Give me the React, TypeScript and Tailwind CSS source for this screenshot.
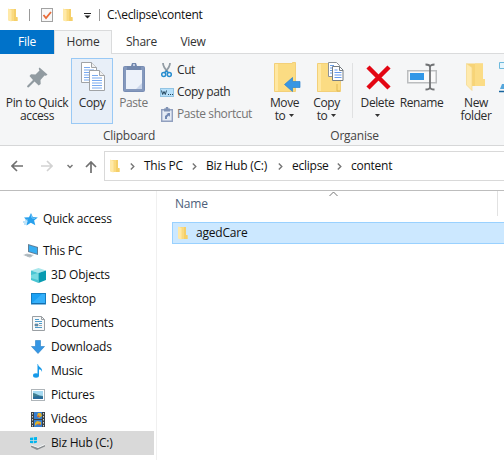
import type { ReactNode } from "react";

type IconProps = { w: number; h: number; children: ReactNode; className?: string };

function Icon({ w, h, children, className = "" }: IconProps) {
  return (
    <svg width={w} height={h} viewBox={`0 0 ${w} ${h}`} className={`block shrink-0 ${className}`}>
      {children}
    </svg>
  );
}

function FolderIcon({ className = "" }: { className?: string }) {
  return (
    <Icon w={10} h={14} className={className}>
      <path d="M1 1h7v8.500h1.500v3.500H1z" fill="#fada80" />
      <path d="M6 1h2v8h1.500v4H6z" fill="#f5cf69" />
      <path d="M0 .500l3.500 1.500v11.500L0 12.500z" fill="#ffe9a8" />
    </Icon>
  );
}

function PinIcon() {
  return (
    <Icon w={21} h={21}>
      <path d="M12.500.500l8 7-1.500 1.200-1.500-.2-4 4.500.2 4-2 1.500-4.200-4L1.500 20.500 0 20l.5-1.500L6 13 2.500 9 4 7.300l4.500.2 4-4-.8-1.800z" fill="#919ba1" />
    </Icon>
  );
}

function Sheet({ x, y }: { x: number; y: number }) {
  return (
    <g transform={`translate(${x} ${y})`}>
      <path d="M.500.500h10l5 5v15H.500z" fill="#fff" stroke="#a0a3a6" />
      <path d="M10.500.500v5h5" fill="#f0f0f0" stroke="#a0a3a6" />
      <path d="M3 5.500h6M3 8h10M3 10.500h10M3 13h10M3 15.500h10M3 18h10" stroke="#79aaf0" strokeWidth="1.100" />
    </g>
  );
}

function CopyIcon() {
  return (
    <Icon w={25} h={30}>
      <Sheet x={0} y={0} />
      <Sheet x={8} y={8} />
    </Icon>
  );
}

function PasteIcon() {
  return (
    <Icon w={22} h={30}>
      <rect x=".500" y="4.500" width="21" height="25" rx="1" fill="#8599bd" stroke="#788db4" />
      <path d="M3 8h16v19H3z" fill="#edf2fa" />
      <path d="M13 27l6-6v6z" fill="#ccd7eb" />
      <path d="M4 4h4l1-3h4l1 3h4v4H4z" fill="#7388ad" />
      <circle cx="11" cy="3" r="1" fill="#dce5f5" />
    </Icon>
  );
}

function CutIcon() {
  return (
    <Icon w={12} h={15}>
      <path d="M2 0c0 4 2 6 5 9M9 0C9 4 7 6 4 9" fill="none" stroke="#929ca4" strokeWidth="1.800" />
      <circle cx="2.700" cy="11.500" r="2" fill="none" stroke="#288ed0" strokeWidth="1.500" />
      <circle cx="8.300" cy="11.500" r="2" fill="none" stroke="#288ed0" strokeWidth="1.500" />
      <path d="M4 9.500l1.500-1.500L7 9.500" fill="none" stroke="#288ed0" strokeWidth="1.500" />
    </Icon>
  );
}

function PathIcon() {
  return (
    <Icon w={14} h={9}>
      <rect x=".500" y=".500" width="13" height="8" fill="#b7e0fa" stroke="#92c4e3" />
      <path d="M1.500 2.500l1.200 4 1.300-3 1.300 3 1.200-4M8 6.500h1M10 6.500h1M12 6.500h1" fill="none" stroke="#24475f" />
    </Icon>
  );
}

function ShortcutIcon() {
  return (
    <Icon w={12} h={15}>
      <path d="M.700 2.700h10.600v11.600H.700z" fill="#e5ebf5" stroke="#91a0bf" strokeWidth="1.400" />
      <path d="M3 1.500h1.500L5 0h2l.5 1.500H9v3H3z" fill="#8193b5" />
      <path d="M4 12V9l3-2.500L5 6h4v4L8 8.500 6 10v2z" fill="#7288b2" />
    </Icon>
  );
}

function MoveIcon() {
  return (
    <Icon w={27} h={31}>
      <path d="M.500 1.500h18V.500h3v29H.500z" fill="#fbdc83" stroke="#f3d079" />
      <path d="M1 2h3v27H1z" fill="#ffe8a2" />
      <path d="M10.500 22.500l8-7v4h7.500v6h-7.500v4z" fill="#3896e3" stroke="#2b83cf" strokeWidth=".7" />
    </Icon>
  );
}

function CopyToIcon() {
  return (
    <Icon w={27} h={31}>
      <path d="M.500 1.500h20v16h3v12H.500z" fill="#fbdc83" stroke="#f3d079" />
      <path d="M1 2h3v27H1z" fill="#ffe8a2" />
      <path d="M20 22v7h3" stroke="#dfb955" fill="none" />
      <path d="M11.500.500h8l3 3v11h-11z" fill="#fff" stroke="#8d9296" />
      <path d="M13 3.500h4M13 6h3M13 8.500h3M13 11h3" stroke="#6a9fe7" />
      <path d="M15.500 4.500h7l3.500 3.500v10.500H15.500z" fill="#fff" stroke="#777e84" />
      <path d="M22.500 4.500v4H26" fill="none" stroke="#777e84" />
      <path d="M17.500 8h3M17.500 10.500h7M17.500 13h7M17.500 15.500h7" stroke="#6499ee" />
    </Icon>
  );
}

function DeleteIcon() {
  return (
    <Icon w={25} h={25}>
      <path d="M2 2l21 21M23 2L2 23" stroke="#e30613" strokeWidth="4.500" />
    </Icon>
  );
}

function RenameIcon() {
  return (
    <Icon w={30} h={28}>
      <rect x=".750" y="7.750" width="28.500" height="12" fill="#fafafa" stroke="#bbbdbf" strokeWidth="1.500" />
      <rect x="3" y="10" width="14" height="7" fill="#3197e7" />
      <path d="M18.500 1.500c2.500 0 4.500 .500 4.500 2.500 0-2 2-2.500 4.500-2.500M23 3v22M18.500 26.500c2.500 0 4.500-.500 4.500-2.500 0 2 2 2.500 4.500 2.500" fill="none" stroke="#707274" strokeWidth="1.800" />
    </Icon>
  );
}

function NewFolderIcon() {
  return (
    <Icon w={20} h={28}>
      <path d="M1 .500h16v15.500h2v7H5z" fill="#f7d477" />
      <path d="M9 .500h8v15.500h2v7H9z" fill="#fbdc86" />
      <path d="M.500.500L6 4.500v23L.500 22z" fill="#ffeaad" stroke="#f4d78a" strokeWidth=".7" />
    </Icon>
  );
}

function Caret() {
  return (
    <Icon w={5} h={3}>
      <path d="M0 0h5L2.500 3z" fill="#333" />
    </Icon>
  );
}

function Crumb() {
  return (
    <Icon w={5} h={7}>
      <path d="M.800.500l3 3-3 3" fill="none" stroke="#767676" strokeWidth="1.400" />
    </Icon>
  );
}

type BigProps = { width: string; icon: ReactNode; lines: ReactNode[]; pad?: string; tone?: string };

function BigButton({ width, icon, lines, pad = "", tone = "text-[#2b2b2b]" }: BigProps) {
  return (
    <div className={`flex h-[66px] shrink-0 flex-col items-center ${width} ${tone}`}>
      <div className={`flex h-[38px] items-center ${pad}`}>{icon}</div>
      {lines.map((line, i) => (
        <div key={i} className="flex h-[13px] items-center gap-1 leading-[13px] whitespace-nowrap">
          {line}
        </div>
      ))}
    </div>
  );
}

function SmallButton({ icon, label, tone = "" }: { icon: ReactNode; label: string; tone?: string }) {
  return (
    <div className={`flex h-[22px] items-center ${tone}`}>
      <span className="flex w-[18px] shrink-0 justify-center">{icon}</span>
      <span className="pl-px whitespace-nowrap">{label}</span>
    </div>
  );
}

function StarIcon() {
  return (
    <Icon w={15} h={13}>
      <path d="M8 0l1.800 4 5 .5-3.700 3 1.200 4.800-4.500-2.500-4.300 2.700L4.500 8 1 4.500l5-.3z" fill="#28a0ec" />
      <path d="M2 7h3M0 9h4M1 11h3" stroke="#7cc7f5" />
      <path d="M8 2l1 3 3 .500" fill="none" stroke="#70c5fa" />
    </Icon>
  );
}

function ComputerIcon() {
  return (
    <Icon w={16} h={14}>
      <path d="M5 0l10 3v8L5 8z" fill="#607e96" />
      <path d="M6 1.200l8 2.500v6L6 7.300z" fill="#37aef1" />
      <path d="M0 11l4-1.500 7 1.500-4 2.700z" fill="#c5ccd1" />
      <path d="M2 11h6M4 12h5" stroke="#929ea6" strokeWidth=".6" />
    </Icon>
  );
}

function CubeIcon() {
  return (
    <Icon w={15} h={15}>
      <path d="M7.500 0L15 2.500 7.500 5 0 2.500z" fill="#a8e7ec" />
      <path d="M0 2.500L7.500 5v10L0 12z" fill="#49c5d3" />
      <path d="M15 2.500L7.500 5v10l7.500-3z" fill="#079bb1" />
      <path d="M0 7l7-2v7l-7-2z" fill="#77dbe1" />
    </Icon>
  );
}

function DesktopIcon() {
  return (
    <Icon w={15} h={12}>
      <rect x=".500" y=".500" width="14" height="10.500" fill="#1ba1f4" stroke="#157dc0" />
      <path d="M1 10L11 1h3v9z" fill="#35b0fa" />
      <path d="M1 10.500h13" stroke="#176eac" />
    </Icon>
  );
}

function DocumentIcon() {
  return (
    <Icon w={13} h={15}>
      <path d="M.500.500h9l3 3v11H.500z" fill="#f7f9fa" stroke="#9a9fa3" />
      <path d="M9.500.500v3h3" fill="none" stroke="#9a9fa3" />
      <path d="M3 3.500h4M3 5.500h7M7 7.500h3M3 11.500h7" stroke="#4e9bca" />
      <path d="M3 8h3v2H3zM7 9.500h3" fill="#4e9bca" stroke="#68747c" strokeWidth=".6" />
    </Icon>
  );
}

function DownloadIcon() {
  return (
    <Icon w={14} h={14}>
      <path d="M4.500.500h5v6h4L7 13.500.500 6.500h4z" fill="#3596e4" stroke="#287fc6" strokeWidth=".6" />
    </Icon>
  );
}

function MusicIcon() {
  return (
    <Icon w={10} h={14}>
      <ellipse cx="3" cy="11.500" rx="3" ry="2.200" fill="#179ae9" />
      <path d="M5 0c0 3 5 3.500 4 8C8.500 6 7.500 5.500 6 5.500v6H4.500V0z" fill="#179ae9" />
    </Icon>
  );
}

function PictureIcon() {
  return (
    <Icon w={14} h={12}>
      <rect x=".500" y=".500" width="13" height="11" fill="#fff" stroke="#afb5b9" />
      <path d="M2 2h10v8H2z" fill="#a6daf2" />
      <path d="M2 4c3 0 5 3 10 3v3H2z" fill="#3f7f91" />
      <path d="M2 8l5-1 5 1v2H2z" fill="#286b9b" />
    </Icon>
  );
}

function VideoIcon() {
  return (
    <Icon w={14} h={15}>
      <path d="M0 0h14v15H0z" fill="#3b4043" />
      <path d="M3 0h8v7H3zM3 8h8v7H3z" fill="#377fd0" />
      <path d="M7 1h3l1 3-3 2-2-2zM6 9l4 1v3l-4-1-2 2v-3z" fill="#e0b22d" />
      <path d="M7 3l2 2H6zM8 11l2 2H7z" fill="#c75b43" />
      <path d="M1.500 1v14M12.500 1v14" stroke="#d0d4d6" strokeDasharray="1.500 1.500" />
    </Icon>
  );
}

function DriveIcon() {
  return (
    <Icon w={16} h={13}>
      <path d="M0 .800L3 .400V3H0zM3.700.300L7 0v3H3.700zM0 3.700h3v2.600L0 6zM3.700 3.700H7v3.100l-3.300-.500z" fill="#00b5ee" />
      <path d="M1 8l7-3 7 3-7 3z" fill="#d9dcde" />
      <path d="M1 8l7 2.500L15 7.500v2L7 13 1 10z" fill="#888d90" />
      <path d="M1 8l7 2.500L15 7.500" fill="none" stroke="#f6f6f6" />
    </Icon>
  );
}

const places: { label: string; icon: ReactNode }[] = [
  { label: "3D Objects", icon: <CubeIcon /> },
  { label: "Desktop", icon: <DesktopIcon /> },
  { label: "Documents", icon: <DocumentIcon /> },
  { label: "Downloads", icon: <DownloadIcon /> },
  { label: "Music", icon: <MusicIcon /> },
  { label: "Pictures", icon: <PictureIcon /> },
  { label: "Videos", icon: <VideoIcon /> },
  { label: "Biz Hub (C:)", icon: <DriveIcon /> },
];

function TitleBar() {
  return (
    <div className="flex h-[30px] items-center pl-2">
      <FolderIcon />
      <span className="ml-[11px] h-3 w-px bg-[#999]" />
      <Icon w={12} h={14} className="ml-[11px]">
        <rect x=".500" y=".500" width="11" height="13" fill="#f8f8f8" stroke="#a2a2a2" />
        <path d="M2.500 7l2.500 3 5-6" fill="none" stroke="#e86b38" strokeWidth="1.800" />
      </Icon>
      <FolderIcon className="ml-2.5" />
      <Icon w={7} h={6} className="mt-0.5 ml-[11px]">
        <path d="M0 .500h7" stroke="#222" />
        <path d="M.500 2.500h6L3.500 5.500z" fill="#222" />
      </Icon>
      <span className="ml-2 h-3 w-px bg-[#999]" />
      <span className="ml-[7px] tracking-[-0.3px] whitespace-nowrap">C:\eclipse\content</span>
    </div>
  );
}

function Tabs() {
  return (
    <div className="flex h-6 border-b border-[#dadbdc] text-center leading-[24px] tracking-[-0.25px] text-[#333]">
      <div className="h-6 w-[54px] bg-[#0072c9] text-white">File</div>
      <div className="h-6 w-[58px] border-x border-t border-[#dadbdc] bg-[#f5f6f7] leading-[22px]">Home</div>
      <div className="w-[59px]">Share</div>
      <div className="w-[44px]">View</div>
    </div>
  );
}

function Ribbon() {
  return (
    <div className="flex h-[92px] shrink-0 border-b border-[#d6d7d8] bg-[#f5f6f7] pt-0.5 tracking-[-0.4px] text-[#2b2b2b]">
      <div className="flex w-[260px] shrink-0 flex-col">
        <div className="flex h-[72px] pt-0.5">
          <BigButton width="w-[71px] pl-[3px]" icon={<PinIcon />} lines={["Pin to Quick", "access"]} />
          <div className="h-[66px] w-[42px] border border-[#99c9f5] bg-[#e8eff8]">
            <div className="-mt-px">
              <BigButton width="w-10" pad="pl-0.5" icon={<CopyIcon />} lines={["Copy"]} />
            </div>
          </div>
          <BigButton width="w-[41px]" pad="pl-px" icon={<PasteIcon />} lines={["Paste"]} tone="text-[#747474]" />
          <div className="flex flex-col pt-px pl-1">
            <SmallButton icon={<CutIcon />} label="Cut" />
            <SmallButton icon={<PathIcon />} label="Copy path" />
            <SmallButton icon={<ShortcutIcon />} label="Paste shortcut" tone="text-[#747474]" />
          </div>
        </div>
        <div className="pt-px pr-0.5 text-center leading-[14px] tracking-[-0.25px] text-[#444]">Clipboard</div>
      </div>
      <div className="h-[86px] w-px bg-[#e0e1e2]" />
      <div className="flex w-[190px] shrink-0 flex-col">
        <div className="flex h-[72px] pt-0.5">
          <BigButton width="w-[49px]" pad="pl-[5px]" icon={<MoveIcon />} lines={["Move", <>to <Caret /></>]} />
          <BigButton width="w-[35px]" pad="pl-[7px]" icon={<CopyToIcon />} lines={["Copy", <>to <Caret /></>]} />
          <div className="mt-[5px] ml-[8px] h-[55px] w-px bg-[#e0e1e2]" />
          <BigButton width="w-[48px] pl-px" pad="pl-px" icon={<DeleteIcon />} lines={["Delete", <Caret />]} />
          <BigButton width="w-[41px]" icon={<RenameIcon />} lines={["Rename"]} />
        </div>
        <div className="pt-px pr-px text-center leading-[14px] tracking-[-0.25px] text-[#444]">Organise</div>
      </div>
      <div className="h-[86px] w-px bg-[#e0e1e2]" />
      <div className="flex pt-0.5">
        <BigButton width="w-[49px] pl-[3px]" icon={<NewFolderIcon />} lines={["New", "folder"]} />
        <div className="flex flex-col gap-[15px] pt-1">
          <Icon w={6} h={7}>
            <path d="M.500.500h7v6h-7z" fill="#e6f5fc" stroke="#6db9dc" />
          </Icon>
          <Icon w={6} h={9}>
            <path d="M3 0h4v5H1z" fill="#55a7dc" />
            <path d="M0 7.500h8" stroke="#17649f" strokeWidth="1.500" />
          </Icon>
        </div>
      </div>
    </div>
  );
}

function AddressBar() {
  return (
    <div className="flex h-[45px] shrink-0 border-b border-[#bdbdbd] pt-[5px]">
      <div className="flex h-[30px] w-[104px] items-center pl-[11px]">
        <Icon w={12} h={12}>
          <path d="M6 1L1 6l5 5M1 6h11" fill="none" stroke="#707070" strokeWidth="1.600" />
        </Icon>
        <Icon w={12} h={12} className="ml-[18px]">
          <path d="M6 1l5 5-5 5M11 6H0" fill="none" stroke="#d2d2d2" strokeWidth="1.600" />
        </Icon>
        <Icon w={6} h={5} className="ml-3.5">
          <path d="M.500 1L3 3.500 5.500 1" fill="none" stroke="#777" strokeWidth="1.500" />
        </Icon>
        <Icon w={12} h={12} className="mt-px ml-3">
          <path d="M1 6l5-5 5 5M6 1v11" fill="none" stroke="#707070" strokeWidth="1.700" />
        </Icon>
      </div>
      <div className="flex h-[30px] flex-1 items-center border-y border-l border-[#d9d9d9] pl-[5px] tracking-[-0.25px]">
        <FolderIcon />
        <span className="ml-[10px]"><Crumb /></span>
        <span className="ml-[9px] w-[39px] whitespace-nowrap">This PC</span>
        <span className="ml-[9px]"><Crumb /></span>
        <span className="ml-[9px] w-[63px] whitespace-nowrap">Biz Hub (C:)</span>
        <span className="ml-[9px]"><Crumb /></span>
        <span className="ml-[9px] w-[36px] whitespace-nowrap">eclipse</span>
        <span className="ml-[9px]"><Crumb /></span>
        <span className="ml-[9px] whitespace-nowrap">content</span>
      </div>
    </div>
  );
}

function Sidebar() {
  return (
    <div className="w-[157px] shrink-0 border-r border-[#f0f0f0] pt-4">
      <div className="flex h-6 items-center pl-[23px]">
        <StarIcon />
        <span className="pl-[5px]">Quick access</span>
      </div>
      <div className="mt-2 flex h-6 items-center pl-[23px]">
        <ComputerIcon />
        <span className="pl-1">This PC</span>
      </div>
      {places.map(({ label, icon }) => (
        <div
          key={label}
          className={`flex h-6 w-[154px] items-center pl-[30px] ${label.startsWith("Biz") ? "bg-[#d9d9d9]" : ""}`}
        >
          <span className="flex w-4 shrink-0 justify-center">{icon}</span>
          <span className="pl-[5px] whitespace-nowrap">{label}</span>
        </div>
      ))}
    </div>
  );
}

function FileList() {
  return (
    <div className="flex-1">
      <div className="flex h-[25px] w-[341px] border-r border-[#e2e2e2] pl-[18px] text-[#4c607a]">
        <span className="w-[154px] leading-[26px]">Name</span>
        <Icon w={9} h={6}>
          <path d="M.500 5l4-4 4 4" fill="none" stroke="#777" />
        </Icon>
      </div>
      <div className="mt-[6px] ml-[15px] flex h-[22px] items-center border-y border-l border-[#99d1ff] bg-[#cce8ff] pl-[5px]">
        <FolderIcon />
        <span className="pl-2">agedCare</span>
      </div>
    </div>
  );
}

export default function App() {
  return (
    <div className="flex h-[460px] w-[504px] flex-col overflow-hidden bg-white font-['Open_Sans','Noto_Sans',sans-serif] text-[12px] tracking-[-0.2px] text-[#111]">
      <TitleBar />
      <Tabs />
      <Ribbon />
      <AddressBar />
      <div className="flex flex-1">
        <Sidebar />
        <FileList />
      </div>
    </div>
  );
}
